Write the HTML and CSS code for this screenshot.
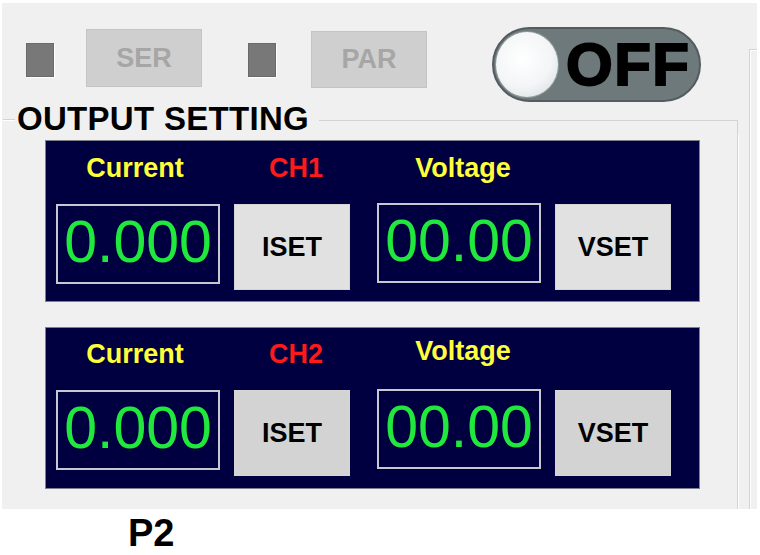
FILE: index.html
```html
<!DOCTYPE html>
<html>
<head>
<meta charset="utf-8">
<link rel="stylesheet" href="styles.css">
</head>
<body>
<div class="app">
  <div class="main">
    <div class="toprow">
      <span class="ind ind1"></span>
      <div class="tbtn ser">SER</div>
      <span class="ind ind2"></span>
      <div class="tbtn par">PAR</div>
      <div class="toggle"><span class="knob"></span><span class="toff">OFF</span></div>
    </div>
    <div class="group">
      <div class="ghead">
        <span class="gl gl-short"></span>
        <span class="gtitle">OUTPUT SETTING</span>
        <span class="gl gl-long"></span>
      </div>
      <div class="gbody">
        <div class="panel p1">
          <div class="lbl cur">Current</div>
          <div class="lbl ch">CH1</div>
          <div class="lbl volt">Voltage</div>
          <div class="disp d-cur">0.000</div>
          <div class="sbtn b-i">ISET</div>
          <div class="disp d-volt">00.00</div>
          <div class="sbtn b-v">VSET</div>
        </div>
        <div class="panel p2">
          <div class="lbl cur">Current</div>
          <div class="lbl ch">CH2</div>
          <div class="lbl volt">Voltage</div>
          <div class="disp d-cur">0.000</div>
          <div class="sbtn b-i">ISET</div>
          <div class="disp d-volt">00.00</div>
          <div class="sbtn b-v">VSET</div>
        </div>
      </div>
    </div>
  </div>
  <div class="side"></div>
</div>
<div class="caption">P2</div>
</body>
</html>
```
FILE: styles.css
```css
html, body {
  margin: 0;
  padding: 0;
  background: #ffffff;
  font-family: "Liberation Sans", Arial, sans-serif;
}
.app {
  margin: 3px 3px 0 2px;
  width: 755px;
  height: 506px;
  background: #f0f0f0;
  display: flex;
  overflow: hidden;
}
.main {
  margin-left: 1px;
  width: 735px;
  display: flex;
  flex-direction: column;
}
.toprow {
  height: 100px;
  display: flex;
  align-items: flex-start;
}
.ind {
  width: 28px;
  height: 34px;
  box-sizing: border-box;
  background: #787878;
  border: 1px solid #6a6a6a;
  box-shadow: 1px 1px 0 #ffffff;
  margin-top: 40px;
}
.ind1 { margin-left: 23px; }
.ind2 { margin-left: 46px; }
.tbtn {
  width: 116px;
  box-sizing: border-box;
  background: #cfcfcf;
  border: 1px solid #c4c4c4;
  color: #a6a6a6;
  font-weight: bold;
  font-size: 27px;
  display: flex;
  align-items: center;
  justify-content: center;
}
.ser { height: 58px; margin-top: 26px; margin-left: 32px; }
.par { height: 57px; margin-top: 28px; margin-left: 35px; }
.toggle {
  margin-left: 65px;
  margin-top: 24px;
  width: 209px;
  height: 75px;
  box-sizing: border-box;
  border-radius: 38px;
  background: #6e797b;
  border: 2px solid #535c5e;
  display: flex;
  align-items: center;
}
.knob {
  width: 64px;
  height: 67px;
  border-radius: 50%;
  margin-left: 1px;
  box-sizing: border-box;
  border: 1px solid #8f999b;
  background: radial-gradient(circle at 42% 40%, #ffffff 0%, #f3f5f6 55%, #d3d8db 100%);
}
.toff {
  margin-left: 7px;
  font-size: 60px;
  font-weight: bold;
  line-height: 1;
  color: #000;
  -webkit-text-stroke: 2px #000;
  letter-spacing: 1.5px;
}
.group {
  flex: 1;
  display: flex;
  flex-direction: column;
}
.ghead {
  height: 32px;
  display: flex;
  align-items: center;
}
.gl {
  height: 0;
  border-top: 1px solid #d3d3d3;
  border-bottom: 1px solid #ffffff;
  margin-top: 1px;
}
.gl-short { width: 12px; }
.gl-long {
  flex: 1;
  margin-left: 10px;
  border-right: 1px solid #d3d3d3;
  height: 15px;
  margin-top: 17px;
  align-self: flex-start;
  border-bottom: none;
}
.gtitle {
  margin-left: 2px;
  font-size: 33px;
  font-weight: bold;
  line-height: 32px;
  letter-spacing: 0.3px;
  color: #000;
  white-space: nowrap;
}
.gbody {
  flex: 1;
  border-right: 1px solid #d3d3d3;
  box-shadow: 1px 0 0 #ffffff;
  padding-top: 5px;
  padding-left: 42px;
}
.panel {
  width: 655px;
  height: 162px;
  box-sizing: border-box;
  background: #000040;
  border: 1px solid #80808c;
  padding-left: 10px;
  display: grid;
  grid-template-columns: 164px 14px 116px 27px 164px 14px 116px;
  grid-template-rows: 30px auto;
  row-gap: 21px;
  align-items: start;
}
.p1 { padding-top: 12px; }
.p2 { padding-top: 11px; margin-top: 25px; }
.lbl {
  font-size: 27px;
  font-weight: bold;
  line-height: 30px;
  text-align: center;
  grid-row: 1;
}
.lbl.cur { grid-column: 1; color: #ffff3a; margin-left: -6px; }
.lbl.ch { grid-column: 3; color: #ff1a1a; margin-left: 8px; }
.lbl.volt { grid-column: 5; color: #ffff3a; margin-left: 8px; }
.p2 .lbl.volt { margin-top: -3px; }
.disp {
  grid-row: 2;
  height: 80px;
  box-sizing: border-box;
  border: 2px solid #c8c8d0;
  color: #20e83c;
  font-size: 59px;
  line-height: 1;
  display: flex;
  align-items: center;
  justify-content: center;
  padding-bottom: 3px;
}
.d-cur { grid-column: 1; }
.d-volt { grid-column: 5; margin-top: -1px; }
.sbtn {
  grid-row: 2;
  height: 86px;
  box-sizing: border-box;
  background: #e1e1e1;
  border: 1px solid #d6d6d6;
  color: #000;
  font-size: 27px;
  font-weight: bold;
  display: flex;
  align-items: center;
  justify-content: center;
}
.p2 .sbtn { background: #d3d3d3; }
.b-i { grid-column: 3; }
.b-v { grid-column: 7; }
.side {
  margin-left: 11px;
  margin-top: 46px;
  flex: 1;
  border-left: 1px solid #d3d3d3;
  border-top: 1px solid #d3d3d3;
  box-shadow: inset 1px 1px 0 #ffffff;
}
.caption {
  margin-top: 5px;
  padding-left: 128px;
  font-size: 38px;
  font-weight: bold;
  line-height: 38px;
  color: #000;
}
```
